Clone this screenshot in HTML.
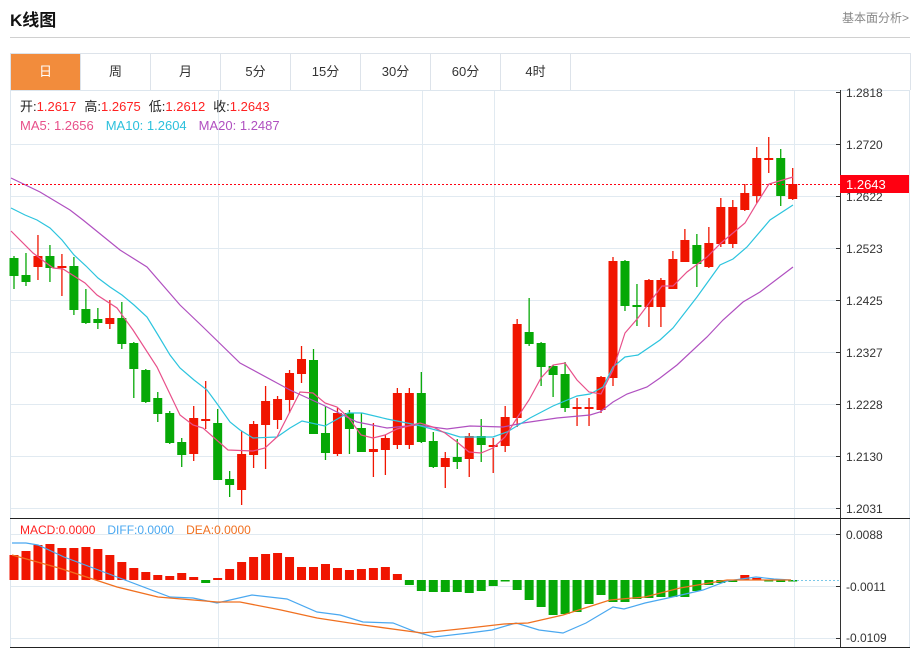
<!DOCTYPE html>
<html><head><meta charset="utf-8"><style>
html,body{margin:0;padding:0;background:#fff;width:918px;height:650px;overflow:hidden;font-family:"Liberation Sans","Noto Sans CJK SC",sans-serif}
#t{position:absolute;left:10px;top:6px;font-size:17px;font-weight:bold;color:#111}
#r{position:absolute;right:9px;top:9px;font-size:12px;color:#888}
#hl{position:absolute;left:10px;top:37px;width:900px;height:1px;background:#d0d0d0}
#tabs{position:absolute;left:10px;top:53px;width:899px;height:36px;border:1px solid #dde3ea;border-bottom:none;display:flex}
#tabs div{width:69px;border-right:1px solid #dde3ea;text-align:center;line-height:36px;font-size:13px;color:#333}
#tabs div.a{background:#f28c3c;color:#fff}
svg{position:absolute;left:0;top:0}
</style></head><body>
<div id="t">K线图</div><div id="r">基本面分析&gt;</div><div id="hl"></div>
<div id="tabs"><div class="a">日</div><div>周</div><div>月</div><div>5分</div><div>15分</div><div>30分</div><div>60分</div><div>4时</div></div>
<svg id="s" width="918" height="650" xmlns="http://www.w3.org/2000/svg" font-family="Liberation Sans, Noto Sans CJK SC, sans-serif">
<g id="grid" stroke="#e1eaf1" stroke-width="1"></g>
<line x1="10" y1="90.5" x2="909" y2="90.5" stroke="#dde6ee"/>
<line x1="10.5" y1="90" x2="10.5" y2="648" stroke="#dde6ee"/>
<line x1="909.5" y1="90" x2="909.5" y2="648" stroke="#dde6ee"/>
<g id="c"></g>
<g id="m"></g>
<line x1="10" y1="184.5" x2="840" y2="184.5" stroke="#f01" stroke-dasharray="2,2"/>
<line x1="840.5" y1="90" x2="840.5" y2="648" stroke="#333"/>
<line x1="10" y1="518.5" x2="910" y2="518.5" stroke="#222"/>
<line x1="10" y1="647.5" x2="910" y2="647.5" stroke="#222"/>
<g font-size="12" fill="#333" id="ax">
<text x="846" y="97">1.2818</text><text x="846" y="149">1.2720</text><text x="846" y="201">1.2622</text><text x="846" y="253">1.2523</text><text x="846" y="305">1.2425</text><text x="846" y="357">1.2327</text><text x="846" y="409">1.2228</text><text x="846" y="461">1.2130</text><text x="846" y="513">1.2031</text>
<text x="846" y="539">0.0088</text><text x="846" y="591">-0.0011</text><text x="846" y="642">-0.0109</text>
</g>
<rect x="840" y="175" width="69" height="18" fill="#f01"/>
<text x="846" y="189" font-size="13" fill="#fff">1.2643</text>
<text y="111" font-size="13" fill="#222"><tspan x="20">开:</tspan><tspan fill="#f22">1.2617</tspan><tspan dx="8">高:</tspan><tspan fill="#f22">1.2675</tspan><tspan dx="8">低:</tspan><tspan fill="#f22">1.2612</tspan><tspan dx="8">收:</tspan><tspan fill="#f22">1.2643</tspan></text>
<text y="130" font-size="13"><tspan x="20" fill="#e8508a">MA5: 1.2656</tspan><tspan dx="12" fill="#2cc0dc">MA10: 1.2604</tspan><tspan dx="12" fill="#b050c0">MA20: 1.2487</tspan></text>
<text y="534" font-size="12"><tspan x="20" fill="#f22">MACD:0.0000</tspan><tspan dx="12" fill="#4aa8f0">DIFF:0.0000</tspan><tspan dx="12" fill="#f07020">DEA:0.0000</tspan></text>
</svg>
<script>
var S="http://www.w3.org/2000/svg";
function el(p,n,a){var e=document.createElementNS(S,n);for(var k in a)e.setAttribute(k,a[k]);p.appendChild(e);return e;}
var g=document.getElementById('grid');
[144,196,248,300,352,404,456,508,534,586,638].forEach(function(y){el(g,'line',{x1:10,x2:840,y1:y+.5,y2:y+.5});el(g,'line',{x1:836,x2:840,y1:y+.5,y2:y+.5,stroke:'#333'});});
el(g,'line',{x1:836,x2:840,y1:92.5,y2:92.5,stroke:'#333'});
[218,422,494,794].forEach(function(x){el(g,'line',{x1:x+.5,x2:x+.5,y1:91,y2:647});});
// candles: [top body, bottom body, high, low, up(1 red)]
var C=[[258,276,256,289,0],[275,282,253,286,0],[256,267,235,280,1],[256,268,245,282,0],[266,268,254,296,1],[266,310,257,315,0],[309,323,289,324,0],[319,323,308,329,0],[318,324,300,329,1],[318,344,302,349,0],[343,369,342,398,0],[370,402,369,403,0],[398,414,392,422,0],[413,443,411,444,0],[442,455,438,467,0],[418,454,406,461,1],[419,421,381,429,1],[423,480,409,480,0],[479,485,471,497,0],[454,490,431,505,1],[424,455,421,468,1],[401,425,386,469,1],[399,420,396,429,1],[373,400,370,413,1],[359,374,346,383,1],[360,434,349,434,0],[433,453,406,460,0],[413,454,408,456,1],[413,429,410,454,0],[428,452,413,452,0],[449,452,423,477,1],[438,450,435,475,1],[393,445,388,449,1],[393,445,388,449,1],[393,442,372,443,0],[441,467,432,468,0],[458,467,452,488,1],[457,462,439,469,0],[436,459,433,477,1],[436,445,419,462,0],[445,446,438,473,1],[417,446,406,452,1],[324,418,319,427,1],[332,344,298,346,0],[343,367,342,386,0],[366,375,365,397,0],[374,408,362,412,0],[407,408,398,426,1],[407,408,398,426,1],[377,410,376,413,1],[261,378,257,386,1],[261,306,260,311,0],[305,307,284,326,0],[280,307,279,327,1],[280,307,278,327,1],[259,289,251,289,1],[240,262,229,262,1],[245,264,234,287,0],[243,267,227,268,1],[207,244,198,247,1],[207,244,200,248,1],[193,210,184,211,1],[158,196,147,203,1],[158,159,137,173,1],[158,196,149,206,0],[184,199,168,200,1]];
var cg=document.getElementById('c');
C.forEach(function(c,i){var x=14+11.98*i,col=c[4]?'#f01500':'#06a806';
el(cg,'line',{x1:x,x2:x,y1:c[2],y2:c[3],stroke:col,'stroke-width':1.3});
el(cg,'rect',{x:x-4.5,y:c[0],width:9,height:Math.max(2,c[1]-c[0]),fill:col});});
function pl(pts,col){el(cg,'polyline',{points:pts,fill:'none',stroke:col,'stroke-width':1.2});}
pl("11,178 40,192 70,210 83,220 120,250 147,267 180,305 203,327 240,363 277,383 290,390 323,405 357,422 387,428 417,425 447,429 470,426 503,427 523,423 557,418 590,415 600,412 613,402 627,394 647,387 660,378 677,365 707,337 723,320 743,302 760,292 793,267","#b050c0");
pl("11,208 25,215 37,220 50,228 62,240 74,255 86,266 98,278 110,287 122,295 134,305 147,317 158,335 170,355 180,368 194,380 207,390 218,405 230,422 240,430 253,438 277,437 290,428 302,421 325,426 348,413 362,413 387,419 417,425 447,433 460,437 493,437 507,432 530,418 553,406 577,396 590,394 603,387 613,367 625,357 638,355 660,340 673,328 697,297 720,265 733,259 747,247 770,220 793,205","#2cc4de");
pl("11,231 33,253 53,268 63,269 85,283 97,295 117,308 133,330 157,367 180,415 193,425 203,428 228,450 253,451 265,448 277,437 300,392 313,393 325,403 337,407 349,418 361,435 373,438 385,435 397,429 420,423 433,427 445,433 457,442 469,452 481,453 493,448 505,437 517,418 529,400 541,378 553,365 565,363 577,380 589,392 601,394 613,370 625,333 638,318 662,286 673,286 687,272 707,257 721,243 745,223 757,203 769,184 793,177","#e8508a");
var H=[555,551,545,544,548,548,547,549,555,562,568,572,575,576,573,577,583,578,569,562,557,554,553,557,567,567,564,568,570,569,568,567,574,585,591,592,592,592,593,591,586,581,590,600,607,615,614,612,604,595,602,602,599,598,597,597,597,591,585,583,582,575,578,581,582,581];
var mg=document.getElementById('m');
H.forEach(function(h,i){var x=14+11.98*i,z=580;var up=h<z;
el(mg,'rect',{x:x-4.5,y:up?h:z,width:9,height:Math.max(1.5,Math.abs(h-z)),fill:up?'#f01500':'#06a806'});});
el(mg,'line',{x1:793,x2:840,y1:580.5,y2:580.5,stroke:'#7cc8e8','stroke-dasharray':'2,2'});
el(mg,'polyline',{points:"12,543 26,543 38,545 64,557 117,577 170,597 193,598 217,603 252,595 287,599 317,612 340,615 363,622 393,623 416,632 434,637 469,633 492,630 516,623 539,630 563,633 586,623 613,607 624,609 645,603 668,598 703,590 727,581 756,577 774,579 791,580",fill:'none',stroke:'#4aa8f0','stroke-width':1.2});
el(mg,'polyline',{points:"12,555 59,568 117,587 158,597 217,602 240,602 281,610 317,618 363,625 422,633 469,628 504,624 528,623 563,615 610,600 645,597 680,588 727,580 791,580",fill:'none',stroke:'#f07020','stroke-width':1.3});
</script>
</body></html>
